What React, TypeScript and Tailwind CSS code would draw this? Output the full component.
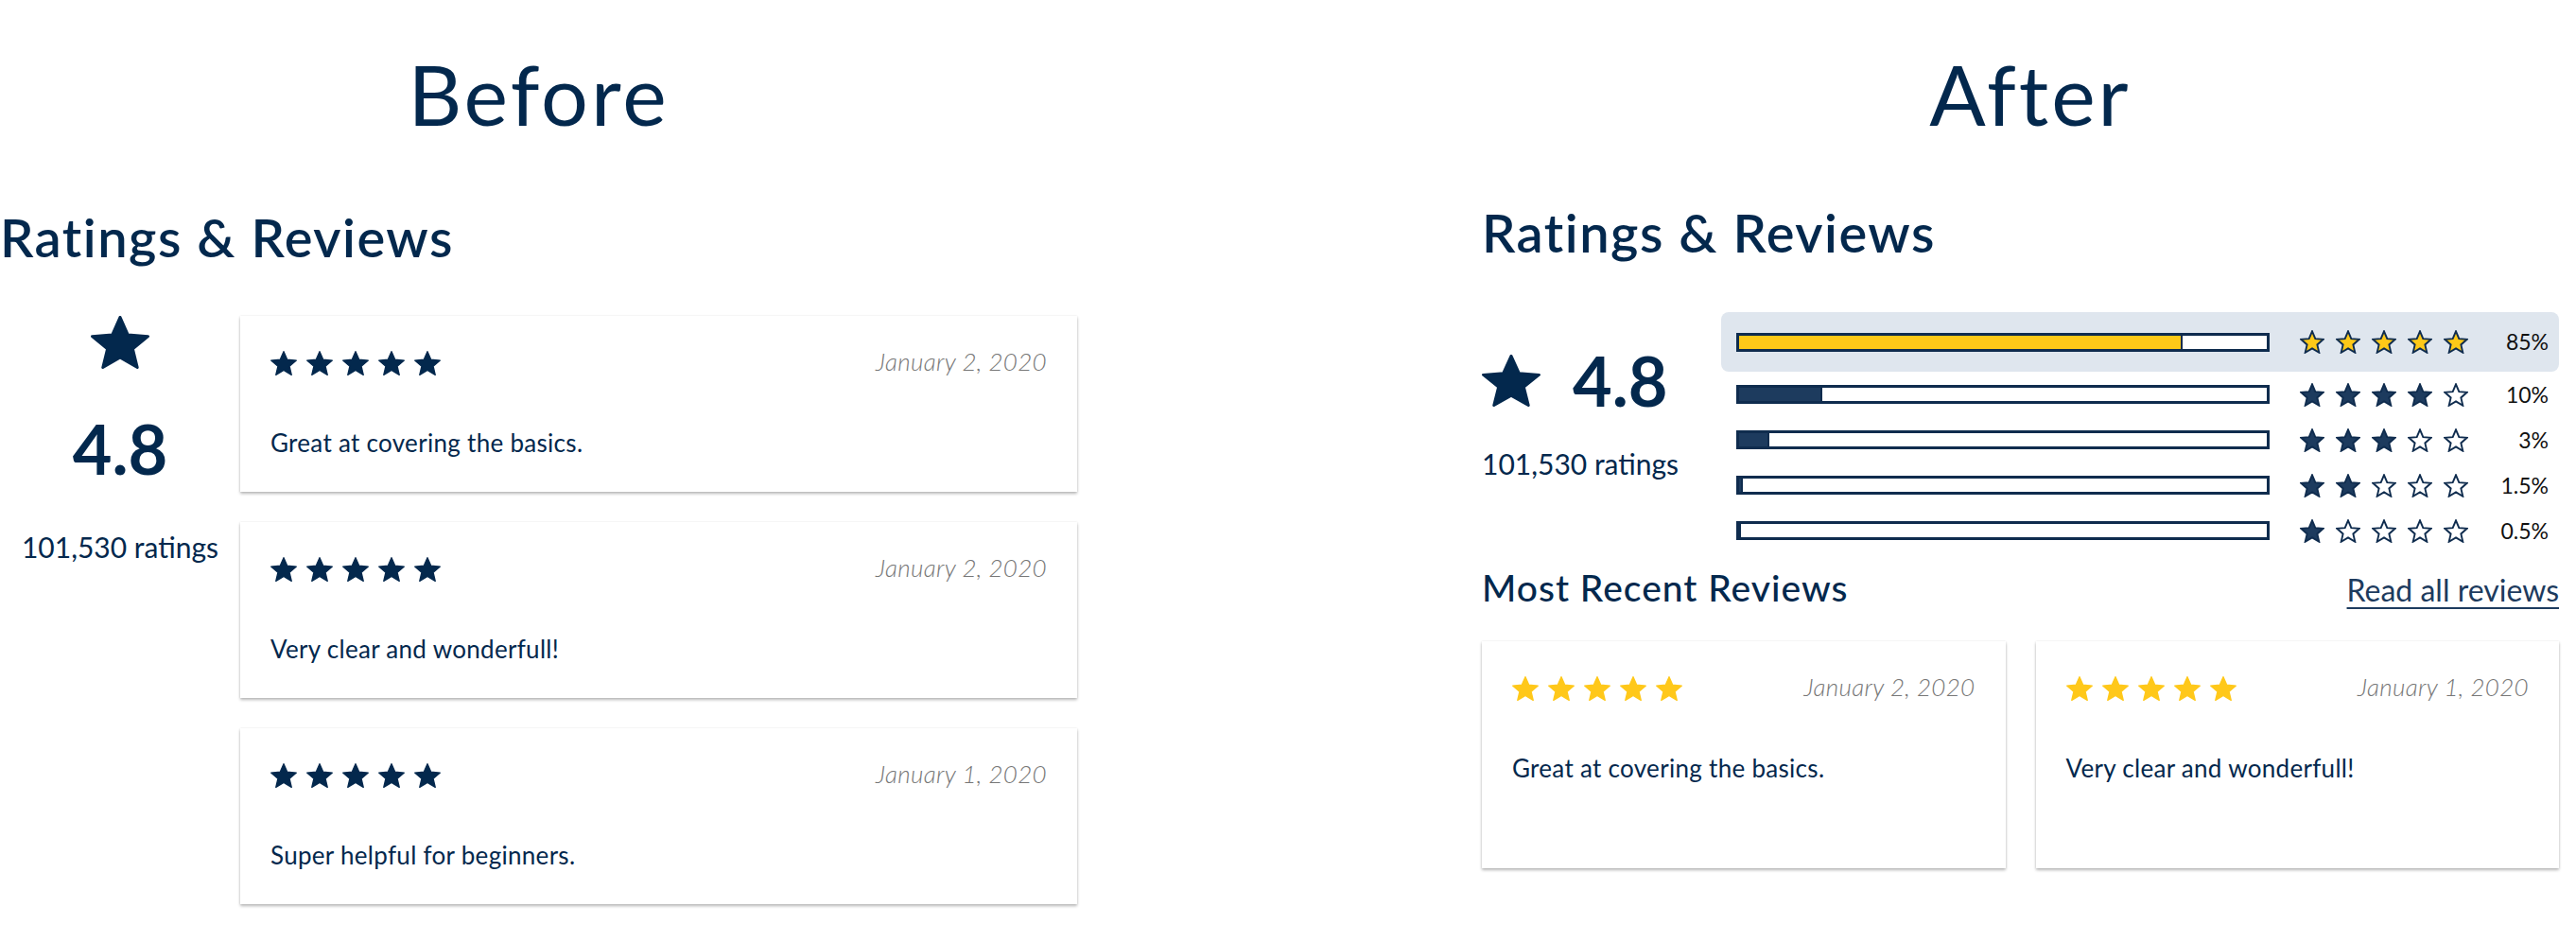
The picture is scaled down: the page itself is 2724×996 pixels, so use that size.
import React from 'react';

const STAR =
  'M12 17.27L18.18 21l-1.64-7.03L22 9.24l-7.19-.61L12 2 9.19 8.63 2 9.24l5.46 4.73L5.82 21z';

// solid star with softened corners
function SolidStar({ className, color }: { className: string; color: string }) {
  return (
    <svg viewBox="1.5 1.5 21 20" preserveAspectRatio="none" className={className}>
      <path d={STAR} fill={color} stroke={color} strokeWidth={1} strokeLinejoin="round" />
    </svg>
  );
}

// outlined star used in the histogram
function OutlineStar({ fill }: { fill: string }) {
  return (
    <svg viewBox="1 1 22 21" className="w-[26px] h-[25px]">
      <path d={STAR} fill={fill} stroke="#0f2c4e" strokeWidth={1.6} strokeLinejoin="miter" />
    </svg>
  );
}

type Review = { date: string; text: string };

const beforeReviews: Review[] = [
  { date: 'January 2, 2020', text: 'Great at covering the basics.' },
  { date: 'January 2, 2020', text: 'Very clear and wonderfull!' },
  { date: 'January 1, 2020', text: 'Super helpful for beginners.' },
];

const afterReviews: Review[] = [
  { date: 'January 2, 2020', text: 'Great at covering the basics.' },
  { date: 'January 1, 2020', text: 'Very clear and wonderfull!' },
];

const rows = [
  { stars: 5, pct: '85%', fill: 469 },
  { stars: 4, pct: '10%', fill: 88 },
  { stars: 3, pct: '3%', fill: 32 },
  { stars: 2, pct: '1.5%', fill: 4 },
  { stars: 1, pct: '0.5%', fill: 0 },
];

function ReviewCard({ review, after }: { review: Review; after?: boolean }) {
  return (
    <div
      className={
        after
          ? 'h-[240px] bg-white px-8 pt-[37px] shadow-[0_2px_3px_rgba(0,0,0,0.28),0_0_2px_rgba(0,0,0,0.08)]'
          : 'h-[186px] bg-white px-8 pt-[37px] shadow-[0_2px_3px_rgba(0,0,0,0.28),0_0_2px_rgba(0,0,0,0.08)]'
      }
    >
      <div className="flex items-center justify-between h-[26px]">
        <div className="flex gap-[10px]">
          {[0, 1, 2, 3, 4].map((i) => (
            <SolidStar key={i} className="w-[28px] h-[26px]" color={after ? '#ffc81a' : '#03284d'} />
          ))}
        </div>
        <span className="text-[26px] leading-none italic font-light tracking-[0.3px] text-[#777] -mt-1">
          {review.date}
        </span>
      </div>
      <p className="mt-[58px] text-[26px] leading-none tracking-[0.3px]">{review.text}</p>
    </div>
  );
}

function Before() {
  return (
    <div className="w-[1139px] flex flex-col">
      <h1 className="text-[88px] leading-none tracking-[3px] text-center">Before</h1>
      <h2 className="mt-[80px] text-[56px] leading-none font-semibold tracking-[1.5px]">Ratings &amp; Reviews</h2>
      <div className="mt-[55px] flex">
        <div className="w-[254px] flex flex-col items-center">
          <SolidStar className="w-[62px] h-[56px]" color="#03284d" />
          <div className="mt-[48px] text-[72px] leading-none font-bold">4.8</div>
          <div className="mt-[53px] text-[30px] leading-none">101,530 ratings</div>
        </div>
        <div className="flex-1 flex flex-col gap-8">
          {beforeReviews.map((r, i) => (
            <ReviewCard key={i} review={r} />
          ))}
        </div>
      </div>
    </div>
  );
}

function HistRow({ row, top }: { row: (typeof rows)[number]; top?: boolean }) {
  return (
    <div
      className={
        top
          ? 'h-[63px] rounded-lg bg-[#dfe6ee] flex items-center pl-4 pr-[11px]'
          : 'h-12 flex items-center pl-4 pr-[11px]'
      }
    >
      <div className="w-[564px] h-[20px] border-[3px] border-[#0f2c4e] bg-white flex">
        <div
          className={
            top
              ? 'h-full bg-[#fec918] border-r-2 border-[#0f2c4e]'
              : 'h-full bg-[#1d3b5e] border-r-2 border-[#0f2c4e]'
          }
          style={{ width: row.fill }}
        />
      </div>
      <div className="ml-[32px] flex gap-[12px]">
        {[0, 1, 2, 3, 4].map((i) => (
          <OutlineStar key={i} fill={i < row.stars ? (top ? '#fec918' : '#1d3b5e') : '#ffffff'} />
        ))}
      </div>
      <div className="flex-1 text-right text-[23px] leading-none text-[#111]">{row.pct}</div>
    </div>
  );
}

function After() {
  return (
    <div className="w-[1139px] flex flex-col">
      <h1 className="pl-[21px] text-[88px] leading-none tracking-[3px] text-center">After</h1>
      <h2 className="mt-[75px] text-[56px] leading-none font-semibold tracking-[1.5px]">Ratings &amp; Reviews</h2>
      <div className="mt-[56px] flex">
        <div className="w-[253px] pt-[36px]">
          <div className="flex items-center gap-[34px]">
            <SolidStar className="w-[62px] h-[55px]" color="#03284d" />
            <span className="text-[72px] leading-none font-bold">4.8</span>
          </div>
          <div className="mt-[37px] text-[30px] leading-none">101,530 ratings</div>
        </div>
        <div className="flex-1">
          {rows.map((r, i) => (
            <HistRow key={i} row={r} top={i === 0} />
          ))}
        </div>
      </div>
      <div className="mt-[17px] flex items-baseline justify-between">
        <h3 className="text-[39px] leading-none font-medium tracking-[1px]">Most Recent Reviews</h3>
        <a href="#" className="text-[32px] leading-none text-[#1d3b5e] underline decoration-2 underline-offset-[6px]">
          Read all reviews
        </a>
      </div>
      <div className="mt-[37px] grid grid-cols-2 gap-8">
        {afterReviews.map((r, i) => (
          <ReviewCard key={i} review={r} after />
        ))}
      </div>
    </div>
  );
}

export default function App() {
  return (
    <div className="w-[2724px] h-[996px] bg-white text-[#03284d] font-['Lato','Open_Sans',sans-serif] flex pt-[55px]">
      <Before />
      <div className="ml-[428px]">
        <After />
      </div>
    </div>
  );
}
